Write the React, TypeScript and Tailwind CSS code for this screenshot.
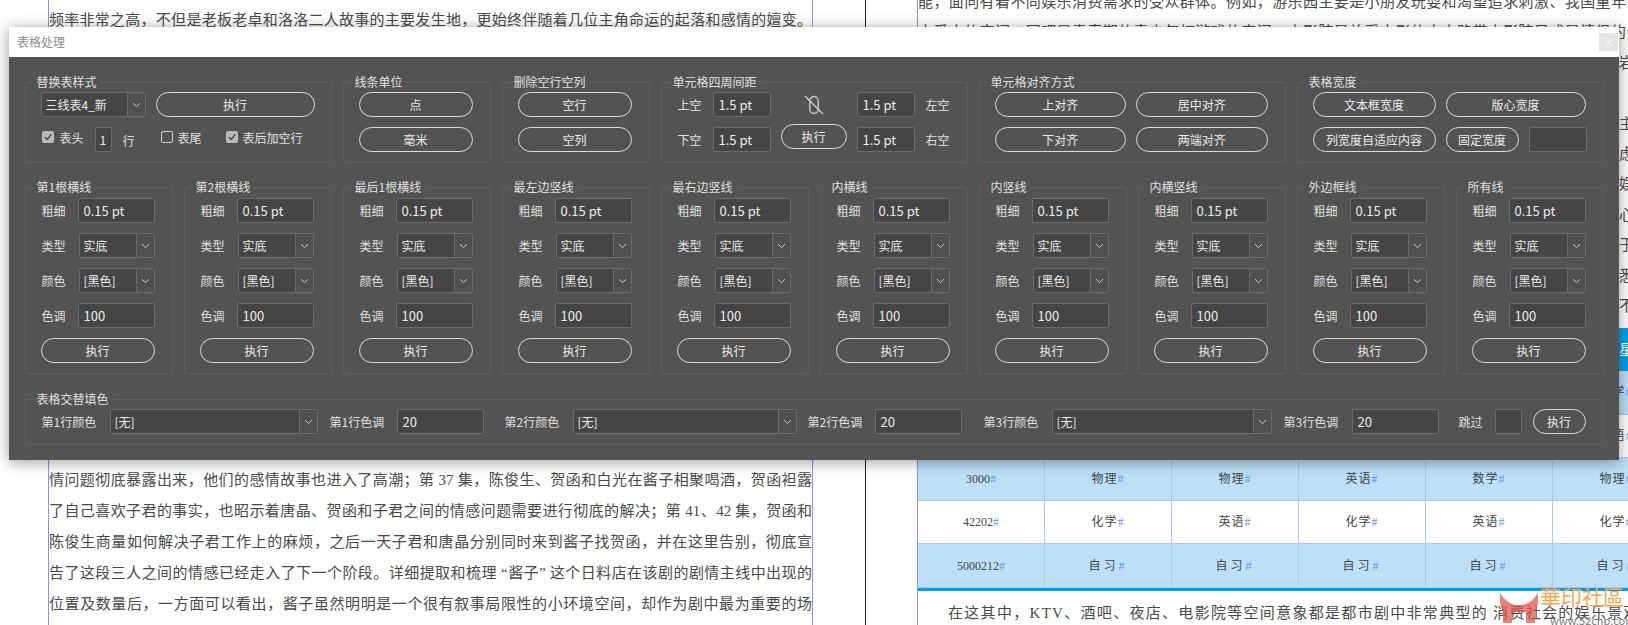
import React from "react";

const ui = '"Noto Sans CJK SC","Noto Sans",sans-serif';
const doc = '"Liberation Serif","Noto Sans CJK SC",serif';

function Chevron() {
  return (
    <svg width="9" height="6" viewBox="0 0 9 6" fill="none" stroke="#d0d0d0" strokeWidth="1">
      <path d="M1 1.2 L4.5 4.6 L8 1.2" />
    </svg>
  );
}

function Btn({ children, className = "" }: { children: React.ReactNode; className?: string }) {
  return (
    <div className={`h-[25px] shrink-0 rounded-full border border-[#dcdcdc] flex items-center justify-center text-[12px] text-[#ececec] ${className}`}>
      {children}
    </div>
  );
}

function Field({ children, className = "" }: { children?: React.ReactNode; className?: string }) {
  return (
    <div className={`h-[25px] shrink-0 rounded-[2px] border border-[#6b6b6b] bg-[#454545] flex items-center pl-[5px] text-[13px] text-[#ececec] ${className}`}>
      {children}
    </div>
  );
}

function Select({ value, className = "" }: { value: string; className?: string }) {
  return (
    <div className={`h-[25px] shrink-0 rounded-[2px] border border-[#6b6b6b] bg-[#454545] flex items-center text-[12px] text-[#ececec] ${className}`}>
      <span className="flex-1 min-w-0 pl-[4px] whitespace-nowrap overflow-hidden">{value}</span>
      <span className="w-[18px] h-full border-l border-[#6b6b6b] bg-[#505050] rounded-r-[2px] flex items-center justify-center shrink-0">
        <Chevron />
      </span>
    </div>
  );
}

function Group({ title, children, className = "", pt = "pt-[1px]" }: { title: string; children: React.ReactNode; className?: string; pt?: string }) {
  return (
    <fieldset className={`min-w-0 border border-[#5f5f5f] rounded-[2px] pb-[10px] pl-[15px] pr-[17px] ${pt} ${className}`}>
      <legend className="ml-[-8px] px-[4px] h-[18px] leading-[18px] text-[12px] text-[#e0e0e0]">{title}</legend>
      {children}
    </fieldset>
  );
}

function Label({ children, className = "" }: { children: React.ReactNode; className?: string }) {
  return <span className={`text-[12px] text-[#e0e0e0] whitespace-nowrap shrink-0 ${className}`}>{children}</span>;
}

function Check({ on, className = "" }: { on: boolean; className?: string }) {
  return on ? (
    <span className={`w-[12px] h-[12px] rounded-[2px] bg-[#b9b9b9] flex items-center justify-center shrink-0 ${className}`}>
      <svg width="10" height="10" viewBox="0 0 10 10" fill="none" stroke="#4a4a4a" strokeWidth="1.5">
        <path d="M2 5.2 L4.2 7.4 L8.2 2.4" />
      </svg>
    </span>
  ) : (
    <span className={`w-[12px] h-[12px] rounded-[2px] border border-[#cfcfcf] shrink-0 ${className}`} />
  );
}

const lineGroups = ["第1根横线", "第2根横线", "最后1根横线", "最左边竖线", "最右边竖线", "内横线", "内竖线", "内横竖线", "外边框线", "所有线"];

function LineGroup({ title }: { title: string }) {
  return (
    <Group title={title} pt="pt-[2px]">
      <div className="flex flex-col gap-[10px]">
        <div className="flex items-center gap-[12px]">
          <Label className="w-[24px] ml-[1px]">粗细</Label>
          <Field className="flex-1 min-w-0">0.15 pt</Field>
        </div>
        <div className="flex items-center gap-[13px]">
          <Label className="w-[24px] ml-[1px]">类型</Label>
          <Select value="实底" className="flex-1 min-w-0" />
        </div>
        <div className="flex items-center gap-[13px]">
          <Label className="w-[24px] ml-[1px]">颜色</Label>
          <Select value="[黑色]" className="flex-1 min-w-0" />
        </div>
        <div className="flex items-center gap-[12px]">
          <Label className="w-[24px] ml-[1px]">色调</Label>
          <Field className="flex-1 min-w-0">100</Field>
        </div>
        <Btn className="w-full">执行</Btn>
      </div>
    </Group>
  );
}

function Dialog() {
  return (
    <div
      className="absolute left-[9px] top-[27px] w-[1610px] h-[433px] flex flex-col shadow-[0_2px_14px_rgba(0,0,0,0.4)]"
      style={{ fontFamily: ui }}
    >
      <div className="h-[30px] bg-white flex items-center justify-between pl-[8px] pr-[1px] shrink-0">
        <span className="text-[12px] text-[#8a8a8a]">表格处理</span>
        <span className="w-[19px] h-[18px] bg-[#e6e6e6] flex items-center justify-center text-[11px] leading-none text-[#fafafa]">×</span>
      </div>
      <div className="flex-1 bg-[#535353] px-[15.5px] pt-[16px] flex flex-col gap-[15px]">
        <div className="grid grid-cols-10 gap-x-[11px]">
          <Group title="替换表样式" className="col-span-2">
            <div className="flex gap-[10px]">
              <Select value="三线表4_新" className="w-[105px]" />
              <Btn className="w-[159px]">执行</Btn>
            </div>
            <div className="flex items-center mt-[10px] h-[25px] text-[12px] text-[#e0e0e0]">
              <Check on className="ml-[1px] mb-[6px]" />
              <span className="ml-[6px] mb-[3px]">表头</span>
              <Field className="w-[17px] ml-[11px] !pl-[4px] !text-[12px]">1</Field>
              <span className="ml-[11px] mt-[3px]">行</span>
              <Check on={false} className="ml-[26px] mb-[6px]" />
              <span className="ml-[5px] mb-[3px]">表尾</span>
              <Check on className="ml-[24px] mb-[6px]" />
              <span className="ml-[5px] mb-[3px] whitespace-nowrap">表后加空行</span>
            </div>
          </Group>
          <Group title="线条单位">
            <div className="flex flex-col gap-[10px]">
              <Btn>点</Btn>
              <Btn>毫米</Btn>
            </div>
          </Group>
          <Group title="删除空行空列">
            <div className="flex flex-col gap-[10px]">
              <Btn>空行</Btn>
              <Btn>空列</Btn>
            </div>
          </Group>
          <Group title="单元格四周间距" className="col-span-2">
            <div className="flex items-center">
              <Label className="w-[24px] ml-[1px]">上空</Label>
              <Field className="w-[58px] ml-[11px]">1.5 pt</Field>
              <span className="w-[66px] ml-[10px] flex justify-center">
                <svg width="20" height="20" viewBox="0 0 20 20" fill="none" stroke="#c8c8c8" strokeWidth="1.4">
                  <rect x="5.8" y="1.5" width="8.4" height="17" rx="4.2" />
                  <path d="M1 1 L19 19" />
                </svg>
              </span>
              <Field className="w-[58px] ml-[10px]">1.5 pt</Field>
              <Label className="w-[24px] ml-[11px]">左空</Label>
            </div>
            <div className="flex items-start mt-[10px] h-[25px]">
              <Label className="w-[24px] ml-[1px] leading-[25px]">下空</Label>
              <Field className="w-[58px] ml-[11px]">1.5 pt</Field>
              <Btn className="w-[66px] ml-[10px] -mt-[3px]">执行</Btn>
              <Field className="w-[58px] ml-[10px]">1.5 pt</Field>
              <Label className="w-[24px] ml-[11px] leading-[25px]">右空</Label>
            </div>
          </Group>
          <Group title="单元格对齐方式" className="col-span-2">
            <div className="grid grid-cols-2 gap-[10px]">
              <Btn>上对齐</Btn>
              <Btn>居中对齐</Btn>
              <Btn>下对齐</Btn>
              <Btn>两端对齐</Btn>
            </div>
          </Group>
          <Group title="表格宽度" className="col-span-2">
            <div className="flex gap-[10px]">
              <Btn className="w-[123px]">文本框宽度</Btn>
              <Btn className="w-[140px]">版心宽度</Btn>
            </div>
            <div className="flex gap-[10px] mt-[10px]">
              <Btn className="w-[123px]">列宽度自适应内容</Btn>
              <Btn className="w-[73px]">固定宽度</Btn>
              <Field className="w-[58px]" />
            </div>
          </Group>
        </div>
        <div className="grid grid-cols-10 gap-x-[11px]">
          {lineGroups.map((t) => (
            <LineGroup key={t} title={t} />
          ))}
        </div>
        <Group title="表格交替填色" className="mt-[1px]">
          <div className="flex items-center">
            <Label className="w-[55px] ml-[1px]">第1行颜色</Label>
            <Select value="[无]" className="w-[208px] ml-[13px]" />
            <Label className="w-[55px] ml-[12px]">第1行色调</Label>
            <Field className="w-[87px] ml-[12px]">20</Field>
            <Label className="w-[55px] ml-[21px]">第2行颜色</Label>
            <Select value="[无]" className="w-[224px] ml-[13px]" />
            <Label className="w-[55px] ml-[11px]">第2行色调</Label>
            <Field className="w-[87px] ml-[12px]">20</Field>
            <Label className="w-[55px] ml-[22px]">第3行颜色</Label>
            <Select value="[无]" className="w-[220px] ml-[13px]" />
            <Label className="w-[55px] ml-[12px]">第3行色调</Label>
            <Field className="w-[87px] ml-[13px]">20</Field>
            <Label className="w-[25px] ml-[20px]">跳过</Label>
            <Field className="w-[27px] ml-[11px]" />
            <Btn className="w-[53px] ml-[11px]">执行</Btn>
          </div>
        </Group>
      </div>
    </div>
  );
}

const leftBottom = [
  "情问题彻底暴露出来，他们的感情故事也进入了高潮；第 37 集，陈俊生、贺函和白光在酱子相聚喝酒，贺函袒露",
  "了自己喜欢子君的事实，也昭示着唐晶、贺函和子君之间的情感问题需要进行彻底的解决；第 41、42 集，贺函和",
  "陈俊生商量如何解决子君工作上的麻烦，之后一天子君和唐晶分别同时来到酱子找贺函，并在这里告别，彻底宣",
  "告了这段三人之间的情感已经走入了下一个阶段。详细提取和梳理 “酱子” 这个日料店在该剧的剧情主线中出现的",
  "位置及数量后，一方面可以看出，酱子虽然明明是一个很有叙事局限性的小环境空间，却作为剧中最为重要的场",
];

const rightTop = [
  "能，面向有着不同娱乐消费需求的受众群体。例如，游乐园主要是小朋友玩耍和渴望追求刺激、我国童年",
  "人爱去的空间，网吧是青春期的青少年打游戏的空间，电影院是放采电影的大大路带电影院只成是情侣约亲",
];
const rightEdge = ["岩", "", "主", "虑", "娱", "心", "于", "悉", "不"];

const rows: { bg: string; cells: string[] }[] = [
  { bg: "bg-[#bde0f7]", cells: ["1", "语文", "数学", "英语", "物理", "数学"] },
  { bg: "bg-white", cells: ["20", "英语", "化学", "数学", "语文", "英语"] },
  { bg: "bg-[#bde0f7]", cells: ["3000", "物理", "物理", "英语", "数学", "物理"] },
  { bg: "bg-white", cells: ["42202", "化学", "英语", "化学", "英语", "化学"] },
  { bg: "bg-[#bde0f7]", cells: ["5000212", "自习", "自习", "自习", "自习", "自习"] },
];

function Cell({ text, first }: { text: string; first: boolean }) {
  const tracking = first ? "" : text === "自习" ? "tracking-[3px]" : "tracking-[1px]";
  return (
    <div className={`w-[127px] shrink-0 flex items-center justify-center border-r border-[#a9c8fb] text-[12px] text-[#444444] ${tracking}`}>
      {text}
      <span className="text-[#5b9bf5]">#</span>
    </div>
  );
}

function Watermark() {
  return (
    <div className="absolute left-[1500px] top-[590px] w-[128px] h-[35px]">
      <svg className="absolute left-0 top-[2px]" width="38" height="32" viewBox="0 0 38 32" fill="#e2574c" opacity="0.75">
        <path d="M0 0 C2 6 8 11 15 13 L23 13 C30 11 36 6 38 0 C39 8 38 14 35 18 L35 31 L26 31 L26 20 L12 20 L12 31 L3 31 L3 18 C0 14 -1 8 0 0 Z" />
      </svg>
      <span
        className="absolute left-[40px] top-[-4px] text-[21px] leading-[24px] text-[#f7a84a] whitespace-nowrap"
        style={{ fontFamily: doc }}
      >
        華印社區
      </span>
      <span className="absolute left-[50px] top-[24px] text-[11px] leading-[12px] text-[#7d7d7d] whitespace-nowrap" style={{ fontFamily: ui }}>
        www.52cnp.com
      </span>
    </div>
  );
}

export default function App() {
  return (
    <div className="relative w-[1628px] h-[625px] overflow-hidden bg-white flex" style={{ fontFamily: doc }}>
      <div className="w-[48px] shrink-0" />
      <div className="w-[765px] shrink-0 border-x border-[#8f8ff5] flex flex-col text-[15px] text-[#4a4a4a]">
        <div className="mt-[5px] h-[31px] leading-[31px] text-justify [text-align-last:justify] whitespace-nowrap overflow-hidden">
          频率非常之高，不但是老板老卓和洛洛二人故事的主要发生地，更始终伴随着几位主角命运的起落和感情的嬗变。
        </div>
        <div className="h-[429px] shrink-0" />
        {leftBottom.map((l) => (
          <div key={l} className="h-[31px] leading-[31px] text-justify [text-align-last:justify] overflow-hidden">
            {l}
          </div>
        ))}
      </div>
      <div className="w-[53px] shrink-0 border-r border-[#222222]" />
      <div className="w-[51px] shrink-0" />
      <div className="flex-1 min-w-0 border-l border-[#8f8ff5] overflow-hidden flex flex-col text-[15px] text-[#4a4a4a]">
        <div className="-mt-[13px] shrink-0">
          {rightTop.map((l) => (
            <div key={l} className="h-[30.4px] leading-[30.4px] whitespace-nowrap tracking-[0.4px]">
              {l}
            </div>
          ))}
          {rightEdge.map((c, i) => (
            <div key={i} className="h-[30.4px] leading-[30.4px] whitespace-nowrap pl-[701px]">
              {c || "\u00a0"}
            </div>
          ))}
        </div>
        <div className="mt-[7px] h-[43px] shrink-0 bg-[#00a0e9] flex text-white text-[15px]">
          <div className="ml-[701px] flex items-center whitespace-nowrap">星期</div>
        </div>
        {rows.map((r, i) => (
          <div key={i} className={`h-[43.3px] shrink-0 flex ${r.bg} border-b border-[#a9c8fb]`}>
            {r.cells.map((c, j) => (
              <Cell key={j} text={c} first={j === 0} />
            ))}
          </div>
        ))}
        <div className="h-[3px] shrink-0 bg-[#00a0e9]" />
        <div className="mt-[7px] h-[30px] leading-[30px] shrink-0 pl-[30px] whitespace-nowrap tracking-[1.3px]">
          在这其中，KTV、酒吧、夜店、电影院等空间意象都是都市剧中非常典型的 消费社会的娱乐景观，消
        </div>
      </div>
      <Dialog />
      <Watermark />
    </div>
  );
}
